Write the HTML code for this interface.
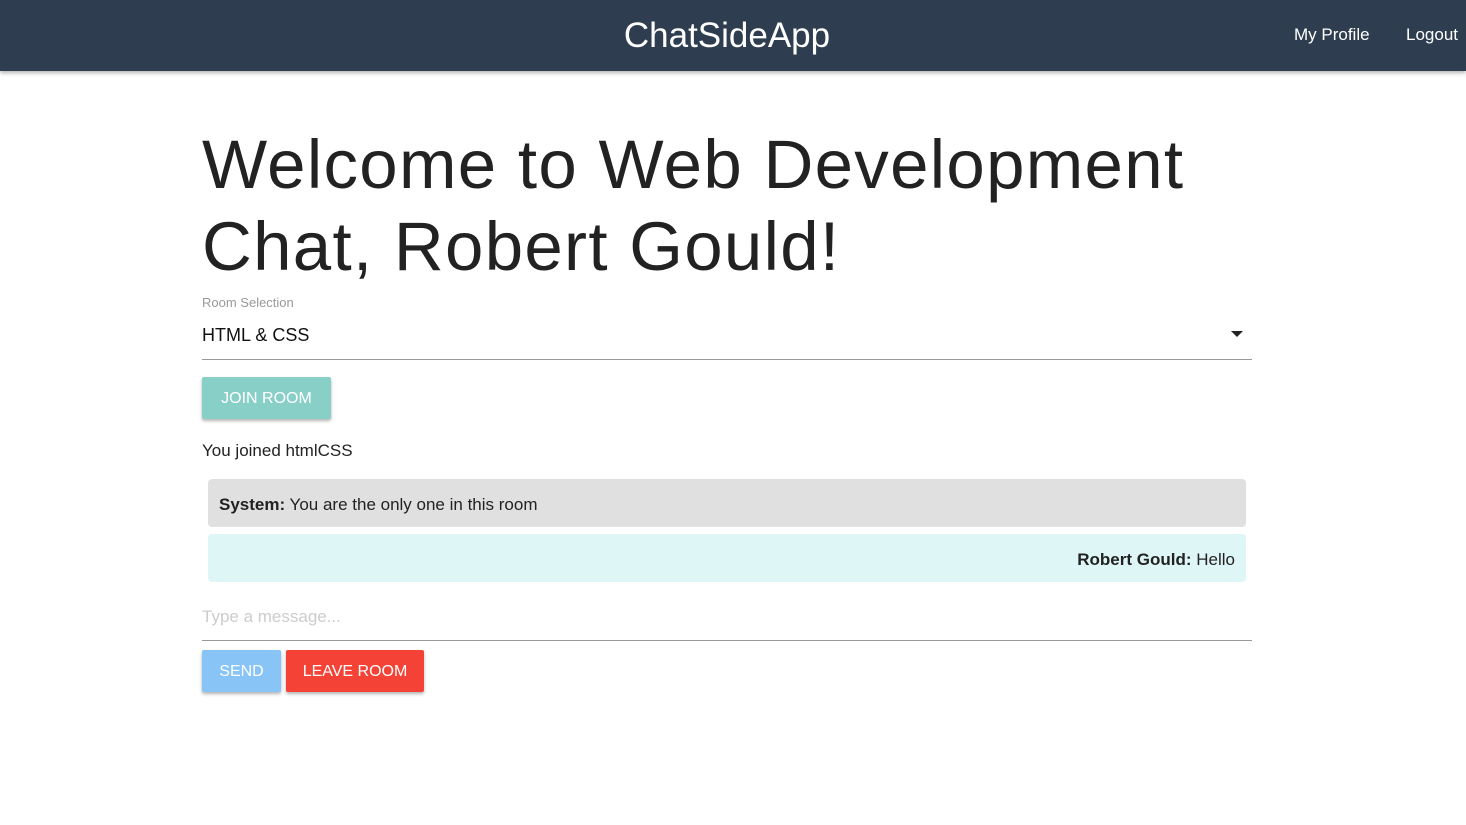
<!DOCTYPE html>
<html><head><style>
*{margin:0;padding:0;box-sizing:border-box}
body{width:1466px;height:825px;background:#fff;font-family:"Liberation Sans",sans-serif;color:#222;position:relative;overflow:hidden}
.nav{position:absolute;left:0;top:0;width:1466px;height:71px;background:#2e3e50;box-shadow:0 2px 4px rgba(0,0,0,.3)}
.brand{position:absolute;left:0;width:1454px;text-align:center;top:16px;font-size:35px;color:#fff}
.nl{position:absolute;top:25px;font-size:17px;color:#fff}
.a{position:absolute}
h1{position:absolute;left:202px;top:124px;font-weight:normal;font-size:69px;line-height:82px;color:#222;letter-spacing:1.3px}
.btn{position:absolute;height:42px;border-radius:2px;color:#fff;font-size:16px;text-align:center;line-height:44px;box-shadow:0 2px 3px rgba(0,0,0,.3)}
.msg{position:absolute;left:208px;width:1038px;height:48px;border-radius:4px;font-size:17px;line-height:51px;padding:0 11px}
</style></head><body>
<div class="nav"><div class="brand">ChatSideApp</div>
<div class="nl" style="left:1294px">My Profile</div><div class="nl" style="left:1406px">Logout</div></div>
<h1>Welcome to Web Development<br>Chat, Robert Gould!</h1>
<div class="a" style="left:202px;top:295px;font-size:13px;color:#999">Room Selection</div>
<div class="a" style="left:202px;top:325px;font-size:18px;color:#111">HTML &amp; CSS</div>
<div class="a" style="left:1231px;top:331px;width:0;height:0;border-left:6px solid transparent;border-right:6px solid transparent;border-top:6px solid #222"></div>
<div class="a" style="left:202px;top:359px;width:1050px;height:1px;background:#999"></div>
<div class="btn" style="left:202px;top:377px;width:129px;background:#88cfc8">JOIN ROOM</div>
<div class="a" style="left:202px;top:441px;font-size:17px">You joined htmlCSS</div>
<div class="msg" style="top:479px;background:#e0e0e0"><b>System:</b> You are the only one in this room</div>
<div class="msg" style="top:534px;background:#dff6f7;text-align:right"><b>Robert Gould:</b> Hello</div>
<div class="a" style="left:202px;top:607px;font-size:17px;color:#ccc">Type a message...</div>
<div class="a" style="left:202px;top:640px;width:1050px;height:1px;background:#999"></div>
<div class="btn" style="left:202px;top:650px;width:79px;background:#89c4f7">SEND</div>
<div class="btn" style="left:286px;top:650px;width:138px;background:#f44336">LEAVE ROOM</div>
</body></html>
